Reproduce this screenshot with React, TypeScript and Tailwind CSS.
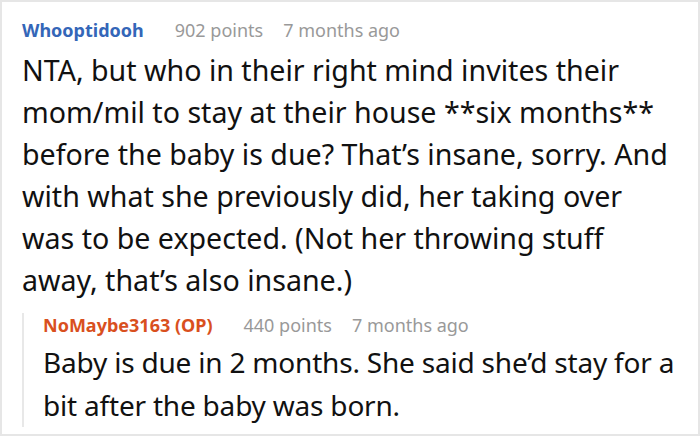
const bodyLines = [
  'NTA, but who in their right mind invites their',
  'mom/mil to stay at their house **six months**',
  'before the baby is due? That’s insane, sorry. And',
  'with what she previously did, her taking over',
  'was to be expected. (Not her throwing stuff',
  'away, that’s also insane.)',
]

const replyLines = ['Baby is due in 2 months. She said she’d stay for a', 'bit after the baby was born.']

export default function App() {
  return (
    <div className="w-[700px] h-[436px] bg-white border-2 border-[#e6e6e6] overflow-hidden" style={{ fontFamily: '"Noto Sans", "Open Sans", sans-serif' }}>
      <div className="pl-[20px] pt-[15px] pr-2">
        <div className="flex items-baseline text-[18px] leading-[26px]">
          <span className="font-bold text-[#3466b8]">Whooptidooh</span>
          <span className="ml-[31px] text-[#999999]">902 points</span>
          <span className="ml-[20px] text-[#999999]">7 months ago</span>
        </div>
        <p className="mt-[6px] text-[28.6px] leading-[42px] text-[#111111] whitespace-nowrap">
          {bodyLines.map((l, i) => (
            <span key={i} className="block">{l}</span>
          ))}
        </p>
        <div className="mt-[12px] flex border-l-2 border-[#e8e8e8] pl-[19px]">
          <div>
            <div className="flex items-baseline text-[18px] leading-[24px]">
              <span className="font-bold text-[#d9501e]">NoMaybe3163 (OP)</span>
              <span className="ml-[31px] text-[#999999]">440 points</span>
              <span className="ml-[20px] text-[#999999]">7 months ago</span>
            </div>
            <p className="mt-[4px] text-[28px] leading-[43px] text-[#111111] tracking-[-0.2px] whitespace-nowrap">
              {replyLines.map((l, i) => (
                <span key={i} className="block">{l}</span>
              ))}
            </p>
          </div>
        </div>
      </div>
    </div>
  )
}
